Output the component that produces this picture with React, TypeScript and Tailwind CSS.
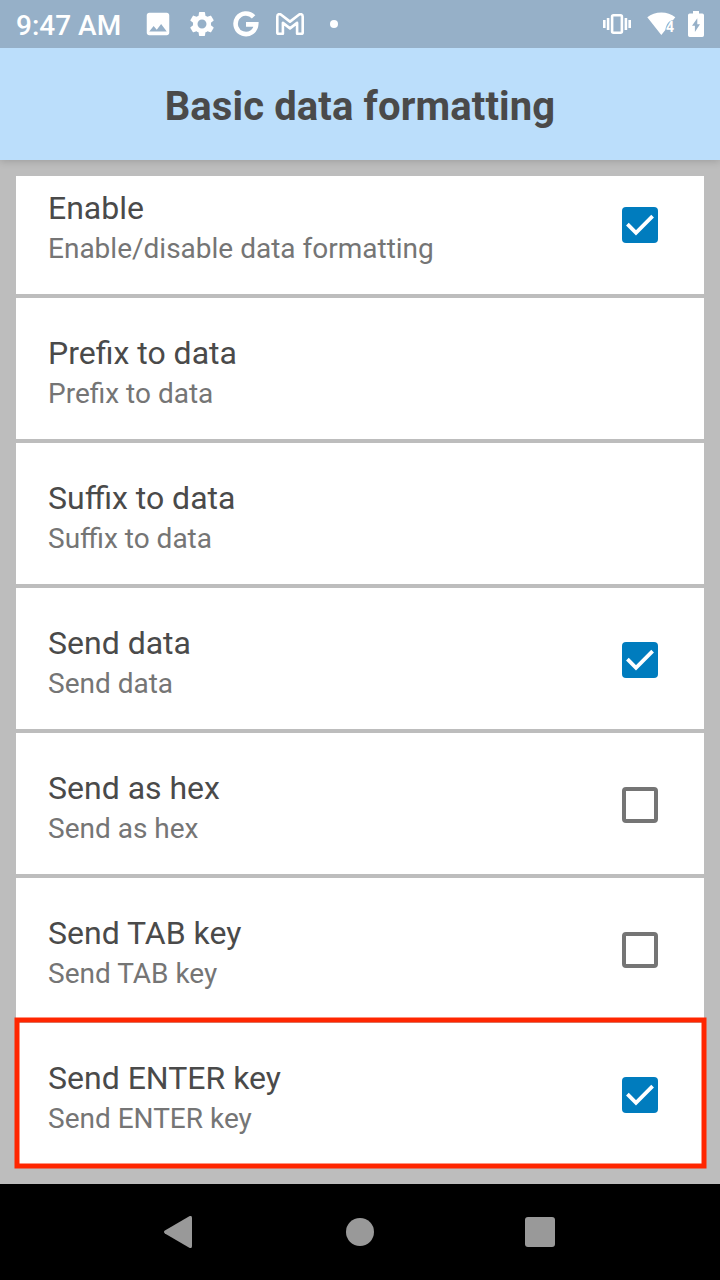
import React, { useState } from "react";
import { MdImage, MdSettings } from "react-icons/md";

interface TSetting {
    id: number;
    title: string;
    summary: string;
    checked?: boolean;
    highlighted?: boolean;
}

const settings: TSetting[] = [
    { id: 1, title: "Enable", summary: "Enable/disable data formatting", checked: true },
    { id: 2, title: "Prefix to data", summary: "Prefix to data" },
    { id: 3, title: "Suffix to data", summary: "Suffix to data" },
    { id: 4, title: "Send data", summary: "Send data", checked: true },
    { id: 5, title: "Send as hex", summary: "Send as hex", checked: false },
    { id: 6, title: "Send TAB key", summary: "Send TAB key", checked: false },
    { id: 7, title: "Send ENTER key", summary: "Send ENTER key", checked: true, highlighted: true },
];

const GoogleIcon = () => (
    <svg width="26" height="26" viewBox="0 0 26 26" fill="none" stroke="white" strokeWidth="4.6">
        <path d="M20.6 5.9A10.3 10.3 0 1 0 23.2 13.4H13" />
    </svg>
);

const GmailIcon = () => (
    <svg width="28" height="22" viewBox="0 0 28 22" fill="none" stroke="white" strokeWidth="2.6" strokeLinejoin="round">
        <path d="M1.3 3.4C1.3 1.1 3.6.6 5.1 1.7L14 8.6l8.9-6.9c1.5-1.1 3.8-.6 3.8 1.7v16q0 1.3-1.3 1.3h-4.3V9.9L14 15.4 6.9 9.9v10.8H2.6q-1.3 0-1.3-1.3z" />
    </svg>
);

const VibrateIcon = () => (
    <svg width="28" height="20" viewBox="0 0 28 20" fill="white">
        <path d="M0 6h2.6v8H0zM3.8 4h2.6v12H3.8zM21.6 4h2.6v12h-2.6zM25.4 6H28v8h-2.6z" />
        <rect x="9.1" y="1.3" width="9.8" height="17.4" rx="1.4" fill="none" stroke="white" strokeWidth="2.6" />
    </svg>
);

const WifiIcon = () => (
    <svg width="29" height="24" viewBox="0 0 29 24" fill="white">
        <path d="M.3 5.2C4 2.1 9 .4 14.3.4s10.3 1.7 14 4.8l-2.4 3c-3.9.2-6.5 3.8-7.6 9.7l-4 5.2z" />
        <text x="19" y="19.6" fontSize="14" fontWeight="700" fontFamily="Roboto, sans-serif">4</text>
    </svg>
);

const BatteryIcon = () => (
    <svg width="16" height="26" viewBox="0 0 16 26">
        <path fill="white" d="M5 0h6v2.5h3.3q1.7 0 1.7 1.7v20.1q0 1.7-1.7 1.7H1.7Q0 26 0 24.3V4.2q0-1.7 1.7-1.7H5z" />
        <path fill="#96b0c8" d="M9.3 7.2v6H12L6.9 21v-6.2H4z" />
    </svg>
);

const StatusBar = () => (
    <div className="relative z-20 h-12 shrink-0 bg-[#96b0c8] text-white flex items-center justify-between pl-4 pr-4">
        <div className="flex items-center">
            <span className="w-[112px] text-[28px] leading-[48px] font-medium whitespace-nowrap pt-[3px]">9:47 AM</span>
            <MdImage className="ml-[15px] size-[30px]" />
            <MdSettings className="ml-[14px] size-[30px]" />
            <div className="ml-[16px]"><GoogleIcon /></div>
            <div className="ml-[17px]"><GmailIcon /></div>
            <div className="ml-[26px] size-2 rounded-full bg-white"></div>
        </div>
        <div className="flex items-center">
            <VibrateIcon />
            <div className="ml-[16px]"><WifiIcon /></div>
            <div className="ml-[12px]"><BatteryIcon /></div>
        </div>
    </div>
);

interface CheckboxProps {
    checked: boolean;
    onChange: () => void;
}

const Checkbox: React.FC<CheckboxProps> = ({ checked, onChange }) => (
    <button type="button" role="checkbox" aria-checked={checked} onClick={onChange} className="size-9">
        {checked ? (
            <svg width="36" height="36" viewBox="0 0 36 36">
                <rect width="36" height="36" rx="4" fill="#007cbe" />
                <path d="M5.4 17.2L14 25.8 30.6 9.2" fill="none" stroke="white" strokeWidth="3.8" />
            </svg>
        ) : (
            <div className="size-9 rounded border-4 border-[#757575]"></div>
        )}
    </button>
);

const Navigation = () => (
    <div className="h-24 shrink-0 bg-black flex items-center justify-center">
        <div className="w-[180px] flex justify-center">
            <svg width="32" height="32" viewBox="2 0 32 32" fill="#999999">
                <path d="M27.3.2Q30 -.9 30 1.9v28.2q0 2.8-2.7 1.7L2.9 17.5q-1.9-1.5 0-3z" />
            </svg>
        </div>
        <div className="w-[180px] flex justify-center">
            <div className="size-7 rounded-full bg-[#999999]"></div>
        </div>
        <div className="w-[180px] flex justify-center">
            <div className="size-[30px] rounded-[3px] bg-[#999999]"></div>
        </div>
    </div>
);

const App = () => {
    const [items, setItems] = useState<TSetting[]>(settings);

    const toggle = (id: number) => {
        setItems(items.map((item) => (item.id === id ? { ...item, checked: !item.checked } : item)));
    };

    return (
        <div className="w-[720px] h-[1280px] flex flex-col overflow-hidden bg-[#bdbdbd] font-[Roboto,sans-serif]">
            <StatusBar />
            <header className="relative z-10 h-28 shrink-0 bg-[#bbdefb] flex items-center justify-center shadow-[0_1px_8px_rgba(0,0,0,0.18)]">
                <h1 className="text-[40px] leading-[48px] font-bold tracking-[0.12px] text-[#4a4a4a] pt-1.5">Basic data formatting</h1>
            </header>
            <main className="flex-1 mt-4 px-4 min-h-0">
                {/* the list is scrolled down a little, so the first row is cut */}
                <div className="h-full flex flex-col justify-end gap-1 pb-5">
                    {items.map((item) => (
                        <div key={item.id} className={`relative w-full shrink-0 bg-white pl-8 pr-[46px] pt-[3px] flex items-center justify-between ${item.id === 1 ? "h-[118px] pb-[23px]" : "h-[141px]"}`}>
                            <div className="pt-[5px]">
                                <p className="text-[32px] leading-[38px] text-[#4a4a4a]">{item.title}</p>
                                <p className="mt-[5px] text-[28px] leading-[34px] text-[#757575]">{item.summary}</p>
                            </div>
                            {item.checked !== undefined && (
                                <Checkbox checked={item.checked} onChange={() => toggle(item.id)} />
                            )}
                            {item.highlighted && (
                                <svg className="absolute -left-1 -top-[7px] pointer-events-none" width="696" height="154" viewBox="0 0 696 154">
                                    <rect x="5" y="4" width="687" height="146" fill="none" stroke="#ff2600" strokeWidth="5" />
                                </svg>
                            )}
                        </div>
                    ))}
                </div>
            </main>
            <Navigation />
        </div>
    );
};

export default App;
